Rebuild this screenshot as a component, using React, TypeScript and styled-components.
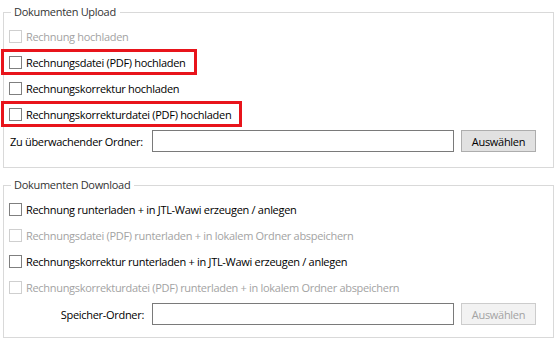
import React from 'react';
import styled, { createGlobalStyle } from 'styled-components';

const GlobalStyle = createGlobalStyle`
  html, body {
    margin: 0;
    background: #ffffff;
  }
  body {
    font-family: 'Open Sans', 'Noto Sans', sans-serif;
    font-size: 11px;
    letter-spacing: -0.3px;
    color: #000;
  }
`;

const Page = styled.div`
  display: flex;
  flex-direction: column;
  gap: 9px;
  padding: 4px 5px 0 3px;
  width: 559px;
  box-sizing: border-box;
`;

const Group = styled.fieldset<{ $bottom: number }>`
  margin: 0;
  width: 551px;
  box-sizing: border-box;
  border: 1px solid #d9d9d9;
  padding: 6px 0 ${({ $bottom }) => $bottom}px 0;
  display: flex;
  flex-direction: column;
  gap: 6px;
`;

const Legend = styled.legend`
  margin-left: 7px;
  padding: 0 4px 0 3px;
  line-height: 16px;
  color: #333;
`;

const Row = styled.label<{ $disabled?: boolean; $marked?: boolean }>`
  display: flex;
  align-items: center;
  gap: 4px;
  align-self: flex-start;
  height: 20px;
  padding: 0 8px 0 5px;
  color: ${({ $disabled }) => ($disabled ? '#a3a3a3' : '#000')};
  outline: ${({ $marked }) => ($marked ? '3px solid #e8141b' : 'none')};
  white-space: nowrap;
`;

const Box = styled.span<{ $disabled?: boolean }>`
  width: 13px;
  height: 13px;
  box-sizing: border-box;
  border: 1px solid ${({ $disabled }) => ($disabled ? '#cfcfcf' : '#7f7f7f')};
  background: #fff;
  flex: none;
`;

const FieldRow = styled.div`
  display: grid;
  grid-template-columns: 137px 302px 76px;
  column-gap: 6px;
  align-items: center;
  height: 22px;
  padding-left: 5px;
`;

const FieldLabel = styled.span<{ $align: 'left' | 'right' }>`
  text-align: ${({ $align }) => $align};
  padding-left: ${({ $align }) => ($align === 'left' ? '1px' : '0')};
  padding-right: 2px;
  white-space: nowrap;
`;

const Input = styled.div`
  height: 22px;
  box-sizing: border-box;
  border: 1px solid #7a7a7a;
  background: #fff;
`;

const Button = styled.div<{ $disabled?: boolean }>`
  height: 22px;
  margin-left: 1px;
  box-sizing: border-box;
  display: flex;
  align-items: center;
  justify-content: center;
  border: 1px solid ${({ $disabled }) => ($disabled ? '#cccccc' : '#adadad')};
  background: ${({ $disabled }) => ($disabled ? '#f2f2f2' : '#e1e1e1')};
  color: ${({ $disabled }) => ($disabled ? '#a3a3a3' : '#000')};
`;

type Option = { text: string; disabled?: boolean; marked?: boolean };

const uploadOptions: Option[] = [
  { text: 'Rechnung hochladen', disabled: true },
  { text: 'Rechnungsdatei (PDF) hochladen', marked: true },
  { text: 'Rechnungskorrektur hochladen' },
  { text: 'Rechnungskorrekturdatei (PDF) hochladen', marked: true },
];

const downloadOptions: Option[] = [
  { text: 'Rechnung runterladen + in JTL-Wawi erzeugen / anlegen' },
  { text: 'Rechnungsdatei (PDF) runterladen + in lokalem Ordner abspeichern', disabled: true },
  { text: 'Rechnungskorrektur runterladen + in JTL-Wawi erzeugen / anlegen' },
  { text: 'Rechnungskorrekturdatei (PDF) runterladen + in lokalem Ordner abspeichern', disabled: true },
];

const Options = ({ items }: { items: Option[] }) => (
  <>
    {items.map((o) => (
      <Row key={o.text} $disabled={o.disabled} $marked={o.marked}>
        <Box $disabled={o.disabled} />
        {o.text}
      </Row>
    ))}
  </>
);

const App = () => (
  <Page>
    <GlobalStyle />
    <Group $bottom={15}>
      <Legend>Dokumenten Upload</Legend>
      <Options items={uploadOptions} />
      <FieldRow>
        <FieldLabel $align="left">Zu überwachender Ordner:</FieldLabel>
        <Input />
        <Button>Auswählen</Button>
      </FieldRow>
    </Group>
    <Group $bottom={12}>
      <Legend>Dokumenten Download</Legend>
      <Options items={downloadOptions} />
      <FieldRow>
        <FieldLabel $align="right">Speicher-Ordner:</FieldLabel>
        <Input />
        <Button $disabled>Auswählen</Button>
      </FieldRow>
    </Group>
  </Page>
);

export default App;
